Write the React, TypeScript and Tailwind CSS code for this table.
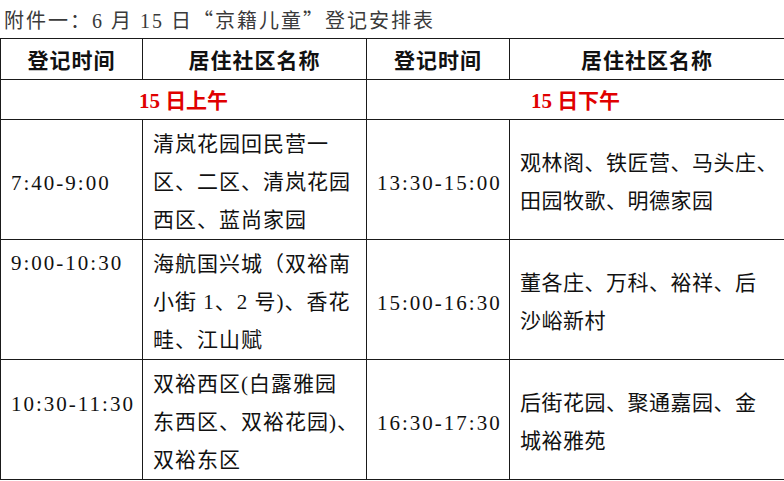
import * as React from 'react'

const rows = [
  {
    am: { time: '7:40-9:00', timeAlign: 'middle', lines: ['清岚花园回民营一', '区、二区、清岚花园', '西区、蓝尚家园'] },
    pm: { time: '13:30-15:00', lines: ['观林阁、铁匠营、马头庄、', '田园牧歌、明德家园'] },
  },
  {
    am: { time: '9:00-10:30', timeAlign: 'top', lines: ['海航国兴城（双裕南', '小街 1、2 号)、香花', '畦、江山赋'] },
    pm: { time: '15:00-16:30', lines: ['董各庄、万科、裕祥、后', '沙峪新村'] },
  },
  {
    am: { time: '10:30-11:30', timeAlign: 'mid-top', lines: ['双裕西区(白露雅园', '东西区、双裕花园)、', '双裕东区'] },
    pm: { time: '16:30-17:30', lines: ['后街花园、聚通嘉园、金', '城裕雅苑'] },
  },
]

function TimeCell({ time, align }: { time: string; align?: string }) {
  const cls =
    align === 'top'
      ? 'align-top pt-[4px]'
      : align === 'mid-top'
        ? 'align-top pt-[25px]'
        : 'align-middle pt-[6px]'
  return (
    <td className={`border border-[#1a1a1a] pl-[10px] leading-[38px] text-[21px] tracking-[2px] whitespace-nowrap ${cls}`}>
      {time}
    </td>
  )
}

function PlaceCell({ lines, left }: { lines: string[]; left?: boolean }) {
  return (
    <td className="border border-[#1a1a1a] pl-[10px] pr-0 pt-[5px] align-middle">
      {lines.map((l, i) => (
        <div
          key={i}
          className={`whitespace-nowrap leading-[38px] text-[21px] ${left ? 'tracking-[1px]' : 'tracking-[0.5px]'}`}
        >
          {l}
        </div>
      ))}
    </td>
  )
}

export default function App() {
  return (
    <div className="w-[784px] h-[481px] bg-white overflow-hidden text-[#111] font-['Liberation_Serif','Noto_Sans_CJK_SC',serif]">
      <div className="h-[38px] pl-[4px] pt-[6px] text-[20px] leading-[28px] text-[#3a3a3a] whitespace-nowrap tracking-[2px]">
        附件一：6 月 15 日<span className="font-['Noto_Sans_CJK_SC',sans-serif]">“</span>京籍儿童<span className="font-['Noto_Sans_CJK_SC',sans-serif]">”</span>登记安排表
      </div>
      <table className="w-[784px] table-fixed border-collapse">
        <colgroup>
          <col className="w-[142px]" />
          <col className="w-[224px]" />
          <col className="w-[143px]" />
          <col className="w-[275px]" />
        </colgroup>
        <tbody>
          <tr className="h-[41px]">
            {['登记时间', '居住社区名称', '登记时间', '居住社区名称'].map((h, i) => (
              <th
                key={i}
                className="border border-[#1a1a1a] text-center align-middle text-[21px] font-bold tracking-[1px] font-['Noto_Sans_CJK_SC',sans-serif] pt-[2px]"
              >
                {h}
              </th>
            ))}
          </tr>
          <tr className="h-[40px]">
            <td colSpan={2} className="border border-[#1a1a1a] text-center align-middle text-[21px] font-bold text-[#e00000] pt-[4px]">
              15 日上午
            </td>
            <td colSpan={2} className="border border-[#1a1a1a] text-center align-middle text-[21px] font-bold text-[#e00000] pt-[4px]">
              15 日下午
            </td>
          </tr>
          {rows.map((r, i) => (
            <tr key={i} className="h-[119px]">
              <TimeCell time={r.am.time} align={r.am.timeAlign} />
              <PlaceCell lines={r.am.lines} left />
              <TimeCell time={r.pm.time} />
              <PlaceCell lines={r.pm.lines} />
            </tr>
          ))}
        </tbody>
      </table>
    </div>
  )
}
